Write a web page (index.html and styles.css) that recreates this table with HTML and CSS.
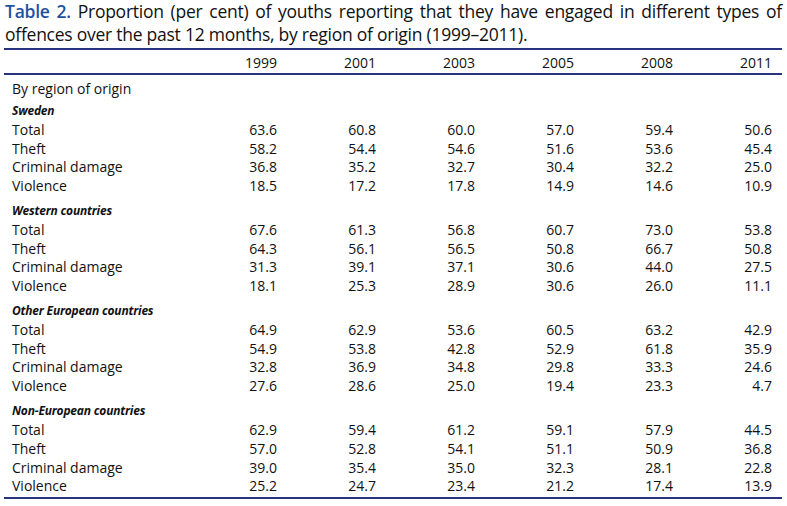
FILE: index.html
```html
<!DOCTYPE html>
<html lang="en">
<head>
<meta charset="utf-8">
<title>Table 2</title>
<link rel="stylesheet" href="styles.css">
</head>
<body>
<div class="page">
  <p class="caption"><span class="line first-line"><span class="label">Table 2.</span> Proportion (per cent) of youths reporting that they have engaged in different types of</span><span class="line">offences over the past 12 months, by region of origin (1999–2011).</span></p>
  <table class="data">
    <thead>
      <tr class="head"><th class="lab"></th><th>1999</th><th>2001</th><th>2003</th><th>2005</th><th>2008</th><th>2011</th></tr>
    </thead>
    <tbody>
      <tr class="group"><td class="lab">By region of origin</td><td></td><td></td><td></td><td></td><td></td><td></td></tr>
      <tr class="section first"><td class="lab">Sweden</td><td></td><td></td><td></td><td></td><td></td><td></td></tr>
      <tr><td class="lab">Total</td><td>63.6</td><td>60.8</td><td>60.0</td><td>57.0</td><td>59.4</td><td>50.6</td></tr>
      <tr><td class="lab">Theft</td><td>58.2</td><td>54.4</td><td>54.6</td><td>51.6</td><td>53.6</td><td>45.4</td></tr>
      <tr><td class="lab">Criminal damage</td><td>36.8</td><td>35.2</td><td>32.7</td><td>30.4</td><td>32.2</td><td>25.0</td></tr>
      <tr><td class="lab">Violence</td><td>18.5</td><td>17.2</td><td>17.8</td><td>14.9</td><td>14.6</td><td>10.9</td></tr>
      <tr class="section"><td class="lab">Western countries</td><td></td><td></td><td></td><td></td><td></td><td></td></tr>
      <tr><td class="lab">Total</td><td>67.6</td><td>61.3</td><td>56.8</td><td>60.7</td><td>73.0</td><td>53.8</td></tr>
      <tr><td class="lab">Theft</td><td>64.3</td><td>56.1</td><td>56.5</td><td>50.8</td><td>66.7</td><td>50.8</td></tr>
      <tr><td class="lab">Criminal damage</td><td>31.3</td><td>39.1</td><td>37.1</td><td>30.6</td><td>44.0</td><td>27.5</td></tr>
      <tr><td class="lab">Violence</td><td>18.1</td><td>25.3</td><td>28.9</td><td>30.6</td><td>26.0</td><td>11.1</td></tr>
      <tr class="section"><td class="lab">Other European countries</td><td></td><td></td><td></td><td></td><td></td><td></td></tr>
      <tr><td class="lab">Total</td><td>64.9</td><td>62.9</td><td>53.6</td><td>60.5</td><td>63.2</td><td>42.9</td></tr>
      <tr><td class="lab">Theft</td><td>54.9</td><td>53.8</td><td>42.8</td><td>52.9</td><td>61.8</td><td>35.9</td></tr>
      <tr><td class="lab">Criminal damage</td><td>32.8</td><td>36.9</td><td>34.8</td><td>29.8</td><td>33.3</td><td>24.6</td></tr>
      <tr><td class="lab">Violence</td><td>27.6</td><td>28.6</td><td>25.0</td><td>19.4</td><td>23.3</td><td>4.7</td></tr>
      <tr class="section"><td class="lab">Non-European countries</td><td></td><td></td><td></td><td></td><td></td><td></td></tr>
      <tr><td class="lab">Total</td><td>62.9</td><td>59.4</td><td>61.2</td><td>59.1</td><td>57.9</td><td>44.5</td></tr>
      <tr><td class="lab">Theft</td><td>57.0</td><td>52.8</td><td>54.1</td><td>51.1</td><td>50.9</td><td>36.8</td></tr>
      <tr><td class="lab">Criminal damage</td><td>39.0</td><td>35.4</td><td>35.0</td><td>32.3</td><td>28.1</td><td>22.8</td></tr>
      <tr class="last"><td class="lab">Violence</td><td>25.2</td><td>24.7</td><td>23.4</td><td>21.2</td><td>17.4</td><td>13.9</td></tr>
    </tbody>
  </table>
</div>
</body>
</html>
```

FILE: styles.css
```css
html, body {
  margin: 0;
  padding: 0;
  background: #ffffff;
}

.page {
  width: 787px;
  padding: 0 4px;
  box-sizing: border-box;
  font-family: "Open Sans", "Noto Sans", sans-serif;
  color: #111111;
}

.caption {
  margin: 0 1px 2px 1px;
  font-size: 17.5px;
  letter-spacing: -0.25px;
  line-height: 23px;
}

.caption .line {
  display: block;
  white-space: nowrap;
}

.caption .first-line {
  white-space: normal;
  text-align: justify;
  text-align-last: justify;
}

.caption .label {
  color: #1d52a0;
  font-weight: 600;
}

.data {
  width: 778px;
  border-collapse: collapse;
  table-layout: fixed;
  font-size: 14px;
  border-top: 2px solid #2a3282;
  border-bottom: 2px solid #2a3282;
}

.data th,
.data td {
  box-sizing: border-box;
  padding: 0 10px 0 0;
  line-height: 18.7px;
  text-align: right;
  font-weight: 400;
  white-space: nowrap;
  width: 99px;
}

.data .lab {
  text-align: left;
  padding-left: 8px;
  width: 184px;
}

.data .head th {
  padding-top: 4px;
  padding-bottom: 0.3px;
  border-bottom: 2px solid #2a3282;
}

.data .group td {
  padding-top: 4.65px;
}

.data .section td {
  padding-top: 6.5px;
}

.data .section.first td {
  padding-top: 4px;
}

.data .section .lab {
  font-weight: 700;
  font-style: italic;
  font-size: 12px;
  letter-spacing: -0.2px;
}

.data .last td {
  padding-bottom: 1.5px;
}
```
